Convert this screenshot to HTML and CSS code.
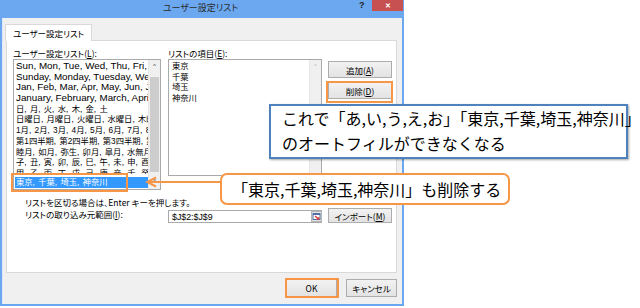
FILE: index.html
```html
<!DOCTYPE html>
<html lang="ja">
<head>
  <meta charset="UTF-8" />
  <title>ユーザー設定リスト</title>
  <link rel="stylesheet" href="styles.css">
</head>
<body>
  <div class="page">
    <div class="dialog">
      <div class="titlebar">
        <span class="title">ユーザー設定リスト</span>
        <span class="help">?</span>
        <span class="close">✕</span>
      </div>

      <div class="client">
        <div class="tabs">
          <div class="tab">ユーザー設定リスト</div>
        </div>

        <div class="panel">
          <div class="lists">
            <div class="label">ユーザー設定リスト(<u>L</u>):</div>
            <div class="label">リストの項目(<u>E</u>):</div>
            <div></div>

            <div class="listbox custom">
              <ul class="items">
                <li>Sun, Mon, Tue, Wed, Thu, Fri, Sat</li>
                <li>Sunday, Monday, Tuesday, Wednesday, Thursday</li>
                <li>Jan, Feb, Mar, Apr, May, Jun, Jul, Aug, Sep</li>
                <li>January, February, March, April, May, June</li>
                <li class="ja">日, 月, 火, 水, 木, 金, 土</li>
                <li class="ja">日曜日, 月曜日, 火曜日, 水曜日, 木曜日, 金曜日</li>
                <li class="ja">1月, 2月, 3月, 4月, 5月, 6月, 7月, 8月, 9月</li>
                <li class="ja">第1四半期, 第2四半期, 第3四半期, 第4四半期</li>
                <li class="ja">睦月, 如月, 弥生, 卯月, 皐月, 水無月, 文月</li>
                <li class="ja">子, 丑, 寅, 卯, 辰, 巳, 午, 未, 申, 酉, 戌, 亥</li>
                <li class="ja cut">甲, 乙, 丙, 丁, 戊, 己, 庚, 辛, 壬, 癸</li>
                <li class="ja selected">東京, 千葉, 埼玉, 神奈川</li>
              </ul>
              <div class="scrollbar">
                <span class="arrow">˄</span>
                <span class="thumb"></span>
                <span class="arrow">˅</span>
              </div>
            </div>

            <div class="listbox entries">
              <ul class="items">
                <li class="ja">東京</li>
                <li class="ja">千葉</li>
                <li class="ja">埼玉</li>
                <li class="ja">神奈川</li>
              </ul>
              <div class="scrollbar off">
                <span class="arrow">˄</span>
              </div>
            </div>

            <div class="side-buttons">
              <button class="btn">追加(<u>A</u>)</button>
              <button class="btn">削除(<u>D</u>)</button>
            </div>
          </div>

          <p class="hint">リストを区切る場合は、Enter キーを押します。</p>

          <div class="range-row">
            <span class="range-label">リストの取り込み元範囲(<u>I</u>):</span>
            <div class="range-input">
              <span>$J$2:$J$9</span>
              <svg class="picker" width="11" height="11" viewBox="0 0 11 11">
                <rect x="0.5" y="0.5" width="10" height="10" fill="#e4e4e4" stroke="#b5b5b5"/>
                <rect x="2" y="2.5" width="7" height="6" fill="#fff" stroke="#4f6fa8"/>
                <rect x="2" y="2.5" width="7" height="1.5" fill="#4f6fa8"/>
                <path d="M4 5 L7.5 8" stroke="#d23a3a" stroke-width="1.4"/>
                <path d="M5.5 8.3 L7.8 8.3 L7.8 6" stroke="#d23a3a" stroke-width="1.1" fill="none"/>
              </svg>
            </div>
            <button class="btn">インポート(<u>M</u>)</button>
          </div>
        </div>

        <div class="footer">
          <button class="btn wide">OK</button>
          <button class="btn wide">キャンセル</button>
        </div>
      </div>
    </div>

    <!-- annotations drawn over the screenshot -->
    <div class="mark mark-row"></div>
    <div class="mark mark-delete"></div>
    <div class="mark mark-ok"></div>

    <div class="note note-blue">
      これで「あ,い,う,え,お」「東京,千葉,埼玉,神奈川」<br>
      のオートフィルができなくなる
    </div>

    <svg class="connector" width="80" height="14" viewBox="0 0 80 14">
      <path d="M2 6 L76 6" stroke="#f79646" stroke-width="2" fill="none"/>
      <path d="M11 1.5 L2 6 L11 10.5" stroke="#f79646" stroke-width="2" fill="none"/>
    </svg>

    <div class="note note-orange">「東京,千葉,埼玉,神奈川」も削除する</div>
  </div>
</body>
</html>
```

FILE: styles.css
```css
* {
  box-sizing: border-box;
}

body {
  margin: 0;
  background: #ffffff;
  font-family: "Noto Sans CJK JP", sans-serif;
  color: #000;
}

.page {
  position: relative;
  width: 640px;
  height: 308px;
  overflow: hidden;
}

/* window frame */
.dialog {
  width: 404px;
  height: 306px;
  background: #6ba8ef;
  padding: 0 2px 2px 2px;
  display: flex;
  flex-direction: column;
}

.titlebar {
  height: 18px;
  display: flex;
  align-items: flex-start;
  flex-shrink: 0;
}

.titlebar .title {
  flex: 1;
  padding-left: 40px;
  text-align: center;
  font-size: 9px;
  line-height: 16px;
  color: #2b2b2b;
  font-feature-settings: "palt";
}

.titlebar .help {
  width: 10px;
  margin-right: 3px;
  font-family: "Liberation Sans", sans-serif;
  font-weight: bold;
  font-size: 9px;
  line-height: 11px;
  color: #222;
}

.titlebar .close {
  width: 31px;
  height: 11px;
  margin-right: -1px;
  background: #c75050;
  color: #fff;
  font-size: 7px;
  font-weight: bold;
  line-height: 11px;
  text-align: center;
}

.client {
  flex: 1;
  background: #f0f0f0;
  border-left: 1px solid #dce9f8;
  padding: 6px 2px 0 2px;
  font-size: 8.5px;
  font-feature-settings: "palt";
}

.tabs {
  display: flex;
  height: 16px;
}

.tab {
  background: #fff;
  border: 1px solid #d9d9d9;
  border-bottom: none;
  padding: 0 7px 0 7px;
  font-size: 8.5px;
  line-height: 16px;
  position: relative;
  z-index: 1;
  height: 17px;
}

.panel {
  width: 391px;
  height: 233px;
  margin-left: 1px;
  background: #fff;
  border: 1px solid #d9d9d9;
  padding: 6px 0 0 6px;
}

.lists {
  display: grid;
  grid-template-columns: 149px 154px 64px;
  grid-template-rows: 12px auto;
  column-gap: 6px;
}

.label {
  line-height: 12px;
  white-space: nowrap;
}

u {
  text-decoration: underline;
  text-underline-offset: 1px;
}

/* list boxes */
.listbox {
  display: flex;
  border: 1px solid #aaaaaa;
  background: #fff;
  overflow: hidden;
}

.listbox.custom {
  width: 148px;
  height: 131px;
}

.listbox.entries {
  height: 117px;
}

.items {
  list-style: none;
  margin: 0;
  padding: 1px 0 0 0;
  flex: 1;
  min-width: 0;
  overflow: hidden;
}

.items li {
  height: 10.7px;
  line-height: 10.7px;
  padding-left: 2px;
  white-space: nowrap;
  overflow: hidden;
  font-family: "Liberation Sans", "Noto Sans CJK JP", sans-serif;
  font-size: 9.8px;
  font-feature-settings: normal;
}

.items li.ja {
  font-size: 8.3px;
  word-spacing: 1px;
}

.entries .items li {
  padding-left: 3px;
}

.items li.cut {
  height: 6px;
  line-height: 10px;
  margin-bottom: 3.5px;
}

.items li.selected {
  background: #3399ff;
  color: #fff;
  margin-left: 1px;
  padding-left: 1px;
}

.scrollbar {
  width: 12px;
  display: flex;
  flex-direction: column;
  align-items: center;
  background: #f0f0f0;
  border-left: 1px solid #e6e6e6;
}

.scrollbar .arrow {
  height: 14px;
  font-family: "DejaVu Sans", sans-serif;
  font-size: 9px;
  line-height: 16px;
  color: #606060;
}

.scrollbar .thumb {
  flex: 1;
  width: 9px;
  margin: 3px 0;
  background: #cdcdcd;
}

.scrollbar.off .arrow {
  color: #c4c4c4;
}

/* buttons */
.side-buttons {
  display: flex;
  flex-direction: column;
  gap: 4px;
  padding-top: 2px;
}

.btn {
  height: 17px;
  padding: 0;
  border: 1px solid #adadad;
  background: linear-gradient(#f2f2f2, #e3e3e3);
  font-family: "Noto Sans CJK JP", sans-serif;
  font-size: 8.5px;
  font-feature-settings: "palt";
  line-height: 14px;
  color: #000;
}

.hint {
  margin: 6px 0 0 12px;
  line-height: 12px;
}

.range-row {
  display: grid;
  grid-template-columns: 149px 154px 64px;
  column-gap: 6px;
  margin-top: 0;
}

.range-label {
  padding-left: 12px;
  line-height: 12px;
  white-space: nowrap;
}

.range-input {
  height: 13px;
  margin-top: 2px;
  border: 1px solid #aaaaaa;
  display: flex;
  align-items: center;
  justify-content: space-between;
  padding-left: 3px;
  font-family: "Liberation Sans", sans-serif;
  font-size: 8.8px;
  font-feature-settings: normal;
}

.range-input .picker {
  margin-right: -1px;
}

.range-row .btn {
  height: 15px;
  line-height: 12px;
}

.footer {
  display: flex;
  justify-content: flex-end;
  gap: 9px;
  padding: 6px 3px 0 0;
}

.btn.wide {
  width: 51px;
  height: 18px;
  line-height: 15px;
}

/* annotations */
.mark {
  position: absolute;
  border: 2px solid #f79646;
}

.mark-row {
  left: 11px;
  top: 173px;
  width: 117px;
  height: 19px;
}

.mark-delete {
  left: 326px;
  top: 81px;
  width: 67px;
  height: 22px;
}

.mark-ok {
  left: 285px;
  top: 278px;
  width: 54px;
  height: 20px;
}

.note {
  position: absolute;
  background: #fff;
  font-family: "Noto Sans CJK JP", sans-serif;
  font-size: 16px;
  color: #000;
  white-space: nowrap;
}

.note-blue {
  left: 269px;
  top: 104px;
  width: 359px;
  height: 55px;
  border: 2px solid #4f81bd;
  box-shadow: 1px 1px 2px rgba(0, 0, 0, 0.35);
  padding: 0 0 0 11px;
  line-height: 25px;
}

.note-orange {
  left: 220px;
  top: 173px;
  width: 290px;
  height: 32px;
  border: 2px solid #f79646;
  border-radius: 7px;
  padding-left: 10px;
  line-height: 28px;
}

.connector {
  position: absolute;
  left: 145px;
  top: 176px;
}
```
